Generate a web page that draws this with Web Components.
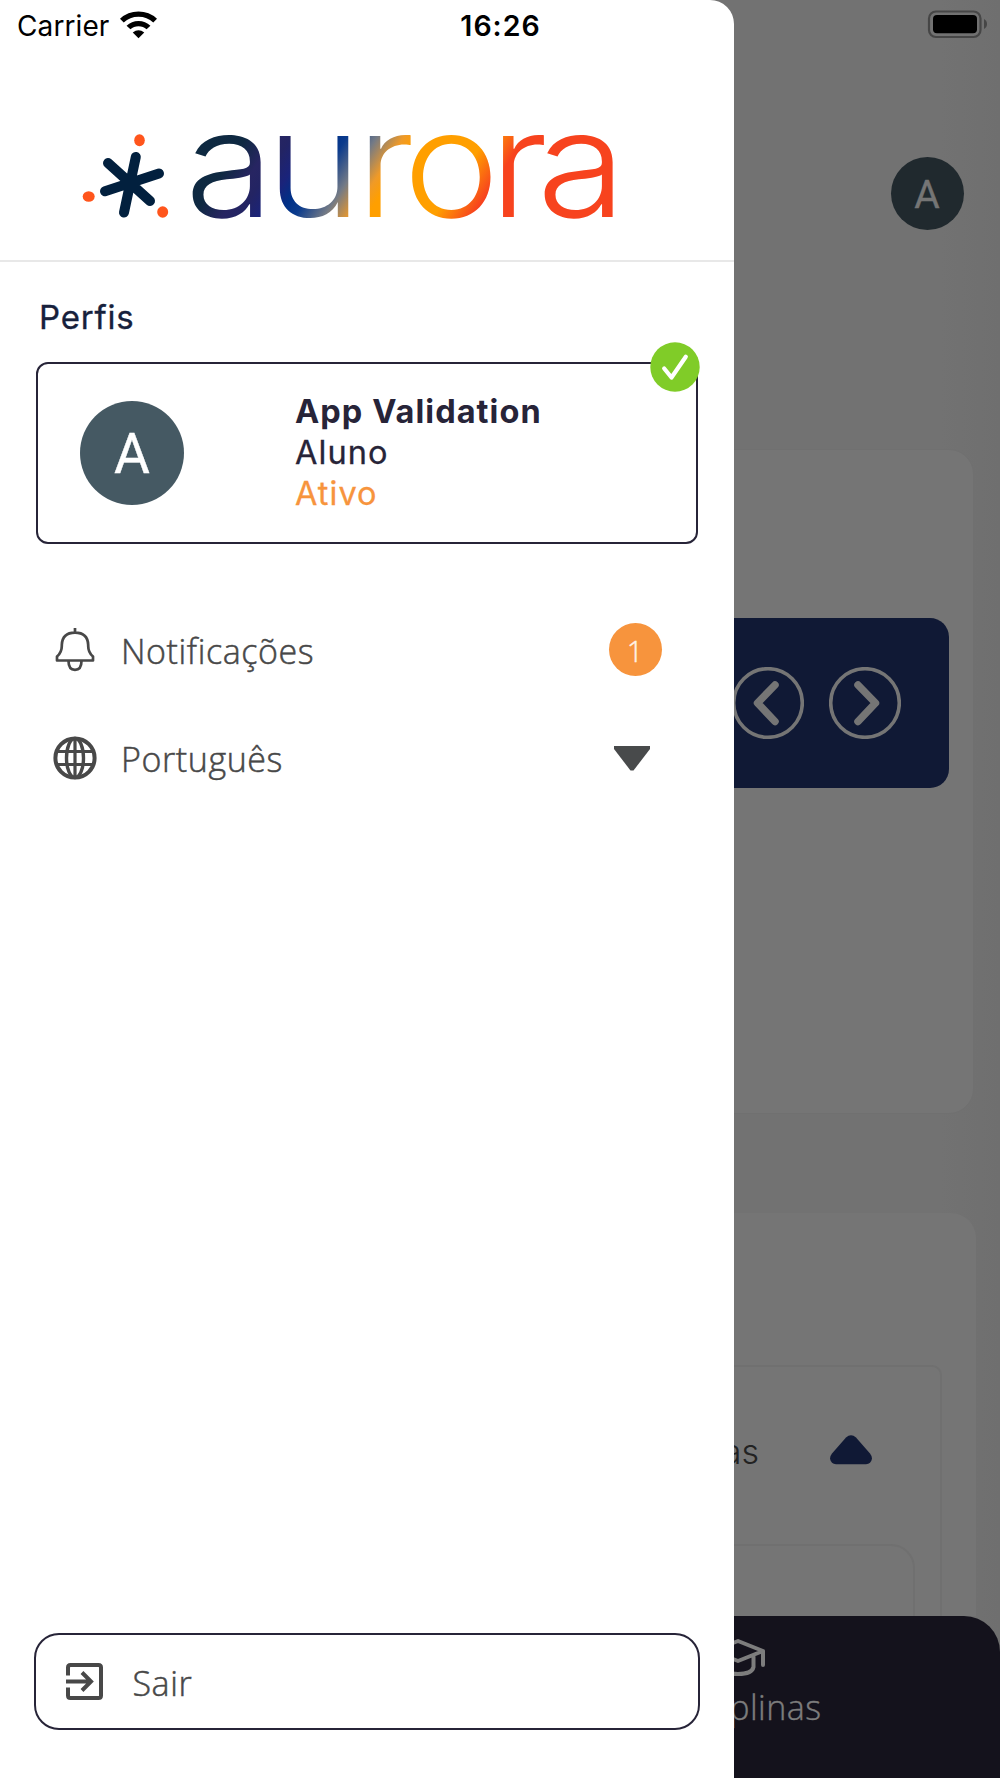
<!DOCTYPE html>
<html lang="pt">
<head>
<meta charset="utf-8">
<title>Aurora</title>
<style>
html,body{margin:0;padding:0}
body{width:1000px;height:1778px;overflow:hidden;font-family:Inter,"Liberation Sans",sans-serif}
</style>
</head>
<body>
<aurora-app></aurora-app>
<script>
const define=(name,html)=>customElements.define(name,class extends HTMLElement{
  constructor(){super();this.attachShadow({mode:'open'}).innerHTML=html;}
});

define('status-bar',`<style>
:host{display:flex;height:52px;width:1000px;box-sizing:border-box;padding:0 13px 0 17px;align-items:flex-start;color:#000}
.side{flex:1;display:flex}
.carrier{font-size:28px;line-height:52px;white-space:nowrap;letter-spacing:.1px;width:103px}
.time{font-size:28.500px;font-weight:600;line-height:51px;letter-spacing:1px;white-space:nowrap;margin-left:-3px}
.right{justify-content:flex-end}
svg{display:block}
</style>
<div class="side"><span class="carrier">Carrier</span>
<svg width="37" height="54.600" viewBox="112.500 0 34 52" preserveAspectRatio="none"><g fill="none" stroke="#000" stroke-width="5"><path d="M114.200 19.600A22 22 0 0 1 144.800 19.600"/><path d="M120.300 26.200A13 13 0 0 1 138.700 26.200"/></g><path d="M129.500 36.500L124.200 31Q129.500 26.600 134.800 31Z"/></svg></div>
<span class="time">16:26</span>
<div class="side right"><svg width="60" height="52" viewBox="927 0 60 52"><rect x="929" y="11.500" width="51.500" height="25.500" rx="7" fill="none" stroke="#464646" stroke-width="2.200"/><rect x="933" y="15" width="44" height="18.300" rx="4" fill="#000"/><path d="M984 19q3 1.700 3 5t-3 5z" fill="#464646"/></svg></div>`);

define('user-avatar',`<style>
:host{display:flex;align-items:center;justify-content:center;width:var(--size,104px);height:var(--size,104px);border-radius:50%;background:var(--bg,#455963);color:var(--fg,#fff);font:400 var(--letter,55px)/1 Roboto,sans-serif;flex:none}
span{position:relative;top:1.5px;-webkit-text-stroke:.4px}
</style><span><slot></slot></span>`);

define('brand-logo',`<style>:host{display:block;height:260px;border-bottom:2px solid #e8e8e8}svg{display:block}</style>
<svg width="734" height="260" viewBox="0 0 734 260" font-family="Inter,sans-serif">
<defs><linearGradient id="g" gradientUnits="userSpaceOnUse" gradientTransform="scale(.90909 1)" x1="180" y1="135" x2="490.6" y2="343.1">
<stop offset="0" stop-color="#0d2a40"/><stop offset=".15" stop-color="#0f2942"/><stop offset=".215" stop-color="#272562"/><stop offset=".25" stop-color="#232463"/><stop offset=".3" stop-color="#1a237a"/><stop offset=".34" stop-color="#003087"/><stop offset=".375" stop-color="#0b3b8d"/><stop offset=".44" stop-color="#737a86"/><stop offset=".5" stop-color="#ef9a28"/><stop offset=".535" stop-color="#ff9f00"/><stop offset=".685" stop-color="#ff9f00"/><stop offset=".77" stop-color="#f7431e"/><stop offset="1" stop-color="#f7431e"/></linearGradient></defs>
<g stroke="#02203e" stroke-width="10" stroke-linecap="round"><path d="M135.800 157L124 212.500M108 163L150 201M105 191.300L159 173.500"/></g>
<g fill="#ff551c"><ellipse cx="139.500" cy="140.300" rx="5.300" ry="6"/><ellipse cx="88.700" cy="196.500" rx="6" ry="5.300"/><ellipse cx="162.700" cy="212" rx="5.500" ry="5.800"/></g>
<text transform="scale(1.1 1)" y="216.600" font-size="147.500" font-weight="310" fill="url(#g)" x="168.2 242.1 323.9 366.5 445 488.2">aurora</text>
</svg>`);

define('profile-card',`<style>
:host{display:flex;position:relative;box-sizing:border-box;height:182px;border:2.5px solid #272438;border-radius:12px;align-items:center;padding-left:42px;gap:111px;color:#272438}
.t{font-size:32.500px;line-height:41px;white-space:nowrap;padding-bottom:2px;letter-spacing:1.050px}
.n{font-weight:700}.s{color:#f7943d}
.r,.s{-webkit-text-stroke:.3px}
.n,.r,.s{display:block}
.badge{position:absolute;right:-3.500px;top:-22px}
</style>
<user-avatar>A</user-avatar>
<div class="t"><span class="n"><slot name="name"></slot></span><span class="r"><slot name="role"></slot></span><span class="s"><slot name="status"></slot></span></div>
<svg class="badge" width="50" height="50" viewBox="0 0 50 50"><circle cx="25" cy="25" r="24.700" fill="#80cc28"/><path d="M14.200 26.500L21.500 35.500L35.800 14.800" fill="none" stroke="#fff" stroke-width="4.200" stroke-linecap="round" stroke-linejoin="round"/></svg>`);

define('menu-row',`<style>
:host{display:flex;height:108px;align-items:center;font:300 34px/46px "Open Sans",sans-serif;color:#484848}
.i{width:44px;display:flex;justify-content:center;padding-bottom:2px}
.l{margin-left:24px;white-space:nowrap;flex:1;letter-spacing:.58px;-webkit-text-stroke:.5px}
</style><span class="i"><slot name="icon"></slot></span><span class="l"><slot></slot></span><slot name="end"></slot>`);

define('count-badge',`<style>:host{display:flex;width:53px;height:53px;border-radius:50%;background:#f7943d;color:#fff3e6;font:300 29px/55px "Open Sans",sans-serif;justify-content:center;-webkit-text-stroke:.4px}</style><slot></slot>`);

define('exit-button',`<style>
:host{display:flex;align-items:center;box-sizing:border-box;height:97px;border:2.5px solid #272438;border-radius:25px;padding-left:30px;gap:29.500px;font:300 34px/46px "Open Sans",sans-serif;color:#484848}
svg{display:block}span{padding-top:2px;letter-spacing:.58px;-webkit-text-stroke:.5px}
</style><svg width="37" height="37" viewBox="0 0 37 37" fill="none" stroke="#484848" stroke-width="4"><path d="M2 12.500V4.500Q2 2 4.500 2H32.500Q35 2 35 4.500V32.500Q35 35 32.500 35H4.500Q2 35 2 32.500V24.500"/><path d="M0 18.500H24M16 9.500L25 18.500L16 27.500"/></svg><span><slot></slot></span>`);

define('side-drawer',`<style>
:host{display:flex;flex-direction:column;width:734px;height:1778px;background:#fff;border-radius:0 24px 0 0;overflow:hidden}
h2{font-weight:400;font-size:33px;line-height:42px;margin:0;padding:33.500px 0 24.500px 39px;color:#17213c;letter-spacing:.8px;-webkit-text-stroke:.3px}
profile-card{margin:0 36px}
nav{display:flex;flex-direction:column;padding:53px 0 0 53px;flex:1}
count-badge{margin:0 72.500px 3px 0}.tri{margin:0 84px 2px 0}
exit-button{margin:0 34px 48px}
svg{display:block}
</style>
<brand-logo></brand-logo>
<h2>Perfis</h2>
<profile-card><span slot="name">App Validation</span><span slot="role">Aluno</span><span slot="status">Ativo</span></profile-card>
<nav>
<menu-row><svg slot="icon" width="40" height="44" viewBox="0 0 40 44" fill="none" stroke="#484848" stroke-width="2.700" stroke-linejoin="round"><path d="M20 0V4.500M2 32.500V28.500Q6.800 24.500 6.800 18V17Q7.300 4.700 20 4.700T33.200 17V18Q33.200 24.500 38 28.500V32.500ZM13.500 33Q13.500 41.800 20 41.800T26.500 33"/></svg>Notificações<count-badge slot="end">1</count-badge></menu-row>
<menu-row><svg slot="icon" width="44" height="44" viewBox="0 0 44 44" fill="none" stroke="#484848" stroke-width="4"><circle cx="22" cy="22" r="19.600"/><ellipse cx="22" cy="22" rx="8.500" ry="19.600" stroke-width="3.400"/><path d="M22 2V42M5 15.500H39M5 28.500H39" stroke-width="3.200"/></svg>Português<svg class="tri" slot="end" width="36" height="25" viewBox="0 0 36 25"><path d="M0 0H36V3L19.500 24.500H16.500L0 3Z" fill="#484a4b"/></svg></menu-row>
</nav>
<exit-button>Sair</exit-button>`);

define('round-arrow',`<style>:host{display:block}svg{display:block}:host([next]) svg{transform:scaleX(-1)}</style>
<svg width="72" height="72" viewBox="0 0 72 72" fill="none" stroke="#757575"><circle cx="36" cy="36" r="34.300" stroke-width="3.600"/><path d="M43 18L25.500 36L43 54.500" stroke-width="7.500" stroke-linecap="round" stroke-linejoin="round"/></svg>`);

define('week-card',`<style>
:host{display:block;box-sizing:border-box;height:665px;margin:0 26px;background:#757575;border:1px solid #707070;border-radius:25px;padding:168px 24px 0}
.b{display:flex;justify-content:flex-end;align-items:center;gap:24.500px;height:170px;border-radius:19px;background:#101935;padding-right:48.500px}
</style><div class="b"><round-arrow></round-arrow><round-arrow next></round-arrow></div>`);

define('subjects-card',`<style>
:host{display:block;box-sizing:border-box;height:403px;margin:99px 24px 0;background:#757575;border-radius:25px 25px 0 0;padding:151.500px 34px 0;overflow:hidden}
.o{box-sizing:border-box;height:260px;border:2px solid #707070;border-radius:10px;padding:0 25px}
.h{display:flex;height:177px;align-items:center;justify-content:flex-end;padding-right:43px;gap:71px;font:300 34px/40px Inter,sans-serif;color:#222}
.h span{padding-bottom:7px}
.h svg{display:block;margin-top:-10px}
.n{border:2px solid #707070;border-radius:24px;height:120px}
</style><div class="o"><div class="h"><span>Disciplinas</span><svg width="42" height="30" viewBox="0 0 42 30"><path d="M16 2.500Q21-2.200 26 2.500L40 18.500Q42 21 42 23.500Q41 29 36 29.300H6Q1 29 0 23.500Q0 21 2 18.500Z" fill="#101935"/></svg></div><div class="n"></div></div>`);

define('tab-bar',`<style>
:host{display:flex;height:162px;box-sizing:border-box;background:#14121c;border-radius:36px 36px 0 0;padding:21px 178px 0 0;justify-content:flex-end}
.t{display:flex;flex-direction:column;align-items:center;font:300 34px/46px "Open Sans",sans-serif;color:#7d7d7d;width:167px;letter-spacing:.5px;-webkit-text-stroke:.4px}
svg{display:block;margin:1px 1px 6px 0}
</style><div class="t"><svg width="56" height="40" viewBox="0 0 56 40" fill="none" stroke="#7d7d7d" stroke-width="4" stroke-linecap="round" stroke-linejoin="round"><path d="M28 3L3 13L28 23L53 13ZM53 13V27M43.500 18V29Q42 36 28 36T12.500 29V18"/></svg><span>Disciplinas</span></div>`);

define('home-page',`<style>
:host{display:flex;flex-direction:column;width:1000px;height:1778px;background:linear-gradient(90deg,#727272 94%,#6f6f6f)}
header{display:flex;justify-content:flex-end;height:292px;padding:157px 36.500px 0 0}
user-avatar{--size:73px;--bg:#20292e;--fg:#757575;--letter:39px}
</style><header><user-avatar>A</user-avatar></header><week-card></week-card><subjects-card></subjects-card><tab-bar></tab-bar>`);

define('aurora-app',`<style>
:host{display:block;position:relative;width:1000px;height:1778px;overflow:hidden}
side-drawer,status-bar{position:absolute;left:0;top:0}
</style><home-page></home-page><side-drawer></side-drawer><status-bar></status-bar>`);
</script>
</body>
</html>
